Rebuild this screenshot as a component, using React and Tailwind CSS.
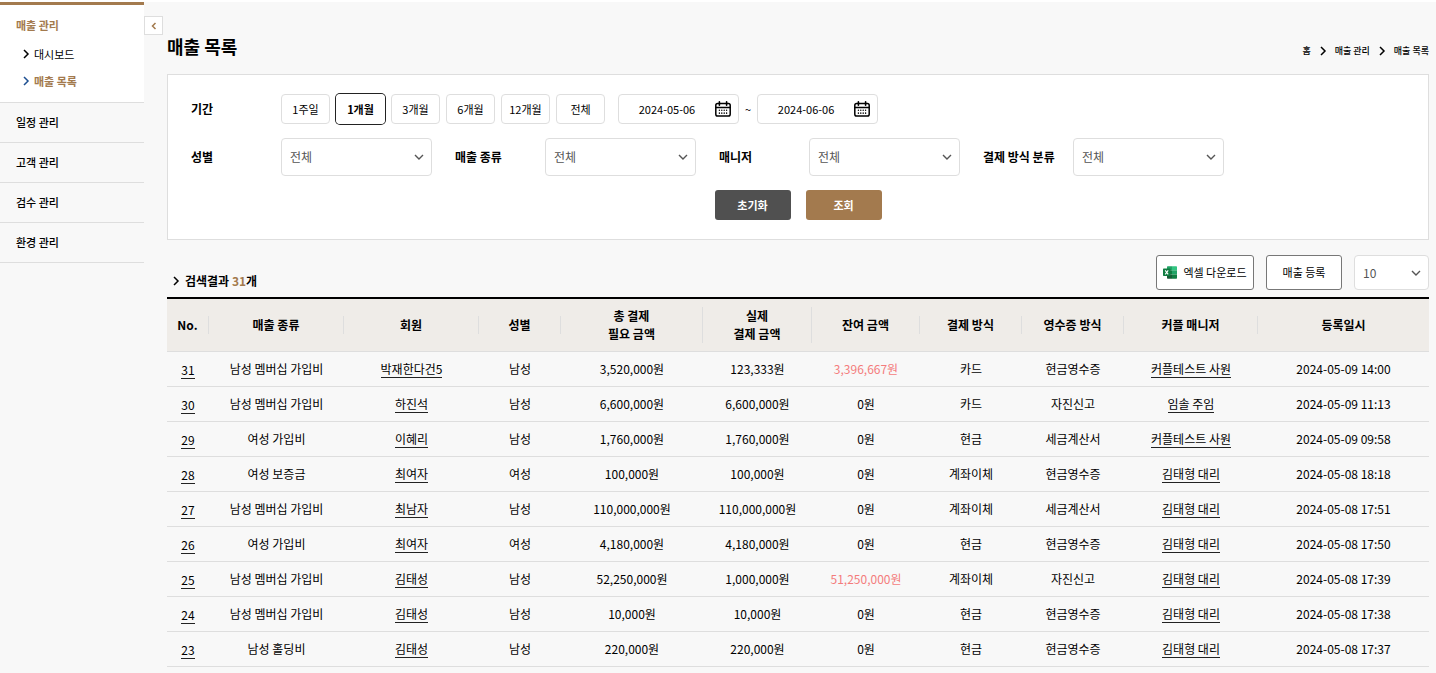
import React from 'react';

const FONT = "font-['Noto_Sans_CJK_KR',sans-serif]";

const periods = ['1주일', '1개월', '3개월', '6개월', '12개월', '전체'];
const menus = ['일정 관리', '고객 관리', '검수 관리', '환경 관리'];
const filters = [
  { id: 'gender', label: '성별' },
  { id: 'kind', label: '매출 종류' },
  { id: 'manager', label: '매니저' },
  { id: 'payment', label: '결제 방식 분류' },
];

const columns = [
  { title: 'No.', width: 'w-[42px]' },
  { title: '매출 종류', width: 'w-[135px]' },
  { title: '회원', width: 'w-[135px]' },
  { title: '성별', width: 'w-[82px]' },
  { title: '총 결제\n필요 금액', width: 'w-[142px]' },
  { title: '실제\n결제 금액', width: 'w-[109px]' },
  { title: '잔여 금액', width: 'w-[108px]' },
  { title: '결제 방식', width: 'w-[102px]' },
  { title: '영수증 방식', width: 'w-[102px]' },
  { title: '커플 매니저', width: 'w-[134px]' },
  { title: '등록일시', width: 'w-[171px]' },
];

const rows = [
  [31, '남성 멤버십 가입비', '박재한다건5', '남성', '3,520,000원', '123,333원', '3,396,667원', '카드', '현금영수증', '커플테스트 사원', '2024-05-09 14:00'],
  [30, '남성 멤버십 가입비', '하진석', '남성', '6,600,000원', '6,600,000원', '0원', '카드', '자진신고', '임솔 주임', '2024-05-09 11:13'],
  [29, '여성 가입비', '이혜리', '남성', '1,760,000원', '1,760,000원', '0원', '현금', '세금계산서', '커플테스트 사원', '2024-05-09 09:58'],
  [28, '여성 보증금', '최여자', '여성', '100,000원', '100,000원', '0원', '계좌이체', '현금영수증', '김태형 대리', '2024-05-08 18:18'],
  [27, '남성 멤버십 가입비', '최남자', '남성', '110,000,000원', '110,000,000원', '0원', '계좌이체', '세금계산서', '김태형 대리', '2024-05-08 17:51'],
  [26, '여성 가입비', '최여자', '여성', '4,180,000원', '4,180,000원', '0원', '현금', '현금영수증', '김태형 대리', '2024-05-08 17:50'],
  [25, '남성 멤버십 가입비', '김태성', '남성', '52,250,000원', '1,000,000원', '51,250,000원', '계좌이체', '자진신고', '김태형 대리', '2024-05-08 17:39'],
  [24, '남성 멤버십 가입비', '김태성', '남성', '10,000원', '10,000원', '0원', '현금', '현금영수증', '김태형 대리', '2024-05-08 17:38'],
  [23, '남성 홀딩비', '김태성', '남성', '220,000원', '220,000원', '0원', '현금', '현금영수증', '김태형 대리', '2024-05-08 17:37'],
];

function Chevron({ className = '', d = 'M2 1l4 4-4 4', box = '0 0 8 10', stroke = 1.5 }) {
  return (
    <svg viewBox={box} fill="none" stroke="currentColor" strokeWidth={stroke} className={`shrink-0 ${className}`} aria-hidden="true">
      <path d={d} />
    </svg>
  );
}

function CalendarIcon() {
  return (
    <svg viewBox="0 0 16 16" className="size-4" fill="none" stroke="currentColor" strokeLinecap="round" aria-hidden="true">
      <rect x="0.8" y="2.4" width="14.4" height="12.7" rx="1.8" strokeWidth="1.5" />
      <path d="M1 6.4h14" strokeWidth="1.5" />
      <path d="M4.4 0.8v3.4M11.6 0.8v3.4" strokeWidth="1.6" />
      <path d="M4.4 9.100v.2M6.8 9.100v.2M9.200 9.100v.2M11.600 9.100v.2M4.400 12v.2M6.800 12v.2M9.200 12v.2M11.600 12v.2" strokeWidth="1.4" />
    </svg>
  );
}

function ExcelIcon() {
  return (
    <svg viewBox="0 0 14 13" className="h-[13px] w-[14px] shrink-0" aria-hidden="true">
      <path d="M4 1a.7.7 0 0 1 .7-.7H9v4H4z" fill="#21a366" />
      <path d="M9 .3h4.3a.7.7 0 0 1 .7.7v3.3H9z" fill="#33c481" />
      <path d="M4 4.3h5v4.2H4z" fill="#107c41" />
      <path d="M9 4.3h5v4.2H9z" fill="#21a366" />
      <path d="M4 8.5h5v4.2H4.7a.7.7 0 0 1-.7-.7z" fill="#185c37" />
      <path d="M9 8.5h5V12a.7.7 0 0 1-.7.7H9z" fill="#107c41" />
      <rect x="0" y="2.5" width="7.5" height="7.5" rx=".7" fill="#107c41" />
      <path d="M2.2 4.3l3 4M5.2 4.3l-3 4" stroke="#fff" strokeWidth="1.1" />
    </svg>
  );
}

function Select({ id, label, options, className }) {
  return (
    <div className={`relative ${className}`}>
      <select id={id} aria-label={label} className="size-full appearance-none rounded border border-[#dedede] bg-white pl-2 pr-6 text-xs text-[#555]">
        {options.map((option) => (
          <option key={option}>{option}</option>
        ))}
      </select>
      <Chevron box="0 0 10 6" d="M1 1l4 4 4-4" stroke={1.4} className="pointer-events-none absolute right-2 top-1/2 h-[6px] w-[10px] -translate-y-1/2 text-[#555]" />
    </div>
  );
}

function DateField({ label, value }) {
  return (
    <div className="flex h-[30px] w-[121px] items-center rounded border border-[#dedede] bg-white">
      <input type="text" aria-label={label} defaultValue={value} className="w-24 bg-transparent text-center text-[11px] outline-none" />
      <button type="button" aria-label={`${label} 선택`}>
        <CalendarIcon />
      </button>
    </div>
  );
}

function Sidebar() {
  return (
    <nav className="w-36 shrink-0 text-[11px] font-medium leading-4">
      <div className="h-[101px] border-b border-t-[3px] border-b-[#dedede] border-t-[#a37a4e] bg-white pl-4 pt-3">
        <a href="#sales" className="block font-bold text-[#a37a4e]">매출 관리</a>
        <ul className="mt-[13px] flex flex-col gap-[11px] pl-[6px]">
          <li>
            <a href="#dashboard" className="flex items-center gap-1 font-normal">
              <Chevron className="h-[10px] w-2" />
              대시보드
            </a>
          </li>
          <li>
            <a href="#list" className="flex items-center gap-1 font-bold text-[#a37a4e]">
              <Chevron className="h-[10px] w-2 text-[#1d4f91]" />
              매출 목록
            </a>
          </li>
        </ul>
      </div>
      {menus.map((menu) => (
        <a key={menu} href="#menu" className="flex h-10 items-center border-b border-[#dedede] pb-px pl-4">{menu}</a>
      ))}
    </nav>
  );
}

function FilterPanel() {
  return (
    <form className="flex flex-col gap-[14px] border border-[#dedede] bg-white px-[23px] py-[19px]" onSubmit={(e) => e.preventDefault()}>
      <div className="flex items-center">
        <span className="w-[90px] text-xs font-bold">기간</span>
        <div className="flex gap-[6px]">
          {periods.map((period) => (
            <button
              key={period}
              type="button"
              className={`h-[30px] w-[49px] rounded border text-[11px] ${period === '1개월' ? 'border-white font-bold ring-1 ring-[#222]' : 'border-[#dedede]'}`}
            >
              {period}
            </button>
          ))}
        </div>
        <div className="ml-[13px] flex items-center gap-[6px] text-[11px]">
          <DateField label="시작일" value="2024-05-06" />
          ~
          <DateField label="종료일" value="2024-06-06" />
        </div>
      </div>
      <div className="flex gap-[23px]">
        {filters.map(({ id, label }) => (
          <div key={id} className="flex items-center">
            <label htmlFor={id} className="w-[90px] text-xs font-bold">{label}</label>
            <Select id={id} options={['전체']} className="h-[38px] w-[151px]" />
          </div>
        ))}
      </div>
      <div className="flex justify-center gap-[15px] text-[11px] font-bold text-white">
        <button type="reset" className="h-[30px] w-[76px] rounded-[3px] bg-[#505050]">초기화</button>
        <button type="submit" className="h-[30px] w-[76px] rounded-[3px] bg-[#a37a4e]">조회</button>
      </div>
    </form>
  );
}

function SalesTable() {
  return (
    <table className="w-full table-fixed border-separate border-spacing-0 border-t-2 border-black text-center text-xs">
      <thead>
        <tr className="h-[53px] bg-[#efece8]">
          {columns.map(({ title, width }, i) => (
            <th key={title} scope="col" className={`${width} border-b border-[#dedede] p-0 font-bold`}>
              <div className={`whitespace-pre-line leading-[18px] ${i < columns.length - 1 ? 'border-r border-[#dedede]' : ''}`}>{title}</div>
            </th>
          ))}
        </tr>
      </thead>
      <tbody>
        {rows.map((row) => (
          <tr key={row[0]} className="h-[35px]">
            {row.map((cell, i) => (
              <td
                key={i}
                className={`border-b border-[#dedede] p-0 leading-4 ${i === 6 && cell !== '0원' ? 'text-[#f47c7c]' : ''} ${i === 0 ? 'pt-[2px]' : ''}`}
              >
                {i === 0 || i === 2 || i === 9 ? (
                  <a href="#detail" className="inline-block border-b border-[#222]">{cell}</a>
                ) : (
                  cell
                )}
              </td>
            ))}
          </tr>
        ))}
      </tbody>
    </table>
  );
}

export default function App() {
  return (
    <div className={`${FONT} min-h-screen border-t-2 border-white bg-[#f8f8f8] text-black`}>
      <div className="flex items-start">
        <Sidebar />
        <button type="button" aria-label="메뉴 접기" className="mt-[14px] grid size-[19px] shrink-0 place-items-center border border-[#dedede] bg-white text-[#a37a4e]">
          <Chevron d="M6 1L2 5l4 4" stroke={2} className="h-2 w-[6px]" />
        </button>
        <main className="ml-1 min-w-0 grow pr-[7px] pt-[31px]">
          <header className="flex items-center justify-between">
            <h1 className="text-lg font-bold leading-[27px]">매출 목록</h1>
            <nav className="flex items-center gap-2 pt-2 text-[9px] font-medium leading-4">
              <a href="#home">홈</a>
              <Chevron className="h-[10px] w-2" />
              <a href="#sales">매출 관리</a>
              <Chevron className="h-[10px] w-2" />
              <a href="#list">매출 목록</a>
            </nav>
          </header>
          <div className="mt-[14px]">
            <FilterPanel />
          </div>
          <div className="mb-[7px] mt-[15px] flex items-end justify-between">
            <h2 className="flex items-center gap-[5px] pl-[5px] text-xs font-bold leading-[18px]">
              <Chevron className="h-[10px] w-2" />
              <span>검색결과 <span className="text-[#a37a4e]">31</span>개</span>
            </h2>
            <div className="flex gap-3 text-[11px]">
              <button type="button" className="flex h-[35px] w-[98px] items-center justify-center gap-[6px] whitespace-nowrap rounded-[3px] border border-[#777] bg-white">
                <ExcelIcon />
                엑셀 다운로드
              </button>
              <button type="button" className="h-[35px] w-[76px] rounded-[3px] border border-[#777] bg-white">매출 등록</button>
              <Select id="size" label="표시 개수" options={['10']} className="h-[35px] w-[75px]" />
            </div>
          </div>
          <SalesTable />
        </main>
      </div>
    </div>
  );
}
